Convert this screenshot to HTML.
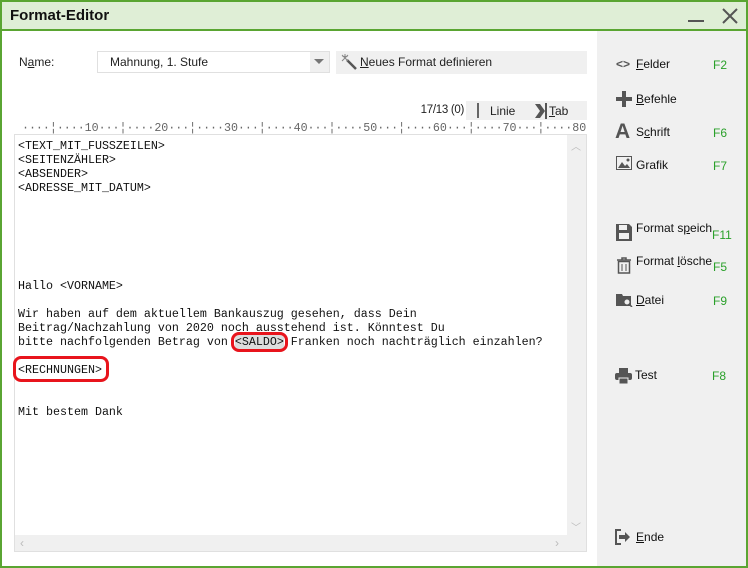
<!DOCTYPE html>
<html><head><meta charset="utf-8"><style>
*{margin:0;padding:0;box-sizing:border-box}
body{width:748px;height:568px;overflow:hidden;background:#fff;font-family:"Liberation Sans",sans-serif;position:relative}
.frame{position:absolute;left:0;top:0;width:748px;height:568px;border:2px solid #5aa532}
.title{position:absolute;left:2px;top:2px;width:744px;height:29px;background:#dfeed6;border-bottom:2px solid #5aa532}
.title span{position:absolute;left:8px;top:5px;font-weight:bold;font-size:15px;color:#111}
.side{position:absolute;left:597px;top:31px;width:149px;height:535px;background:#f0f0f0}
.abs{position:absolute}
.mono{font-family:"Liberation Mono",monospace;font-size:11.67px;color:#111}
.si{position:absolute;font-size:12px;color:#111}
.fk{position:absolute;font-size:12px;color:#2aa02a}
u{text-decoration:underline}
</style></head><body>
<div class="frame"></div>
<div class="title"><span>Format-Editor</span>
<div class="abs" style="left:686px;top:18px;width:16px;height:2px;background:#555"></div>
<svg class="abs" style="left:720px;top:6px" width="16" height="16"><path d="M1 1L15 15M15 1L1 15" stroke="#555" stroke-width="2"/></svg>
</div>
<div class="abs" style="left:19px;top:55px;font-size:12px;color:#222">N<u>a</u>me:</div>
<div class="abs" style="left:97px;top:51px;width:233px;height:22px;border:1px solid #e0e0e0;background:#fff"></div>
<div class="abs" style="left:310px;top:52px;width:19px;height:20px;background:#f0f0f0"></div>
<svg class="abs" style="left:314px;top:59px" width="10" height="6"><path d="M0 0L10 0L5 5Z" fill="#777"/></svg>
<div class="abs" style="left:110px;top:55px;font-size:12px;color:#222">Mahnung, 1. Stufe</div>
<div class="abs" style="left:336px;top:51px;width:251px;height:23px;background:#f0f0f0"></div>
<svg class="abs" style="left:340px;top:53px" width="18" height="18"><path d="M7 7L16 16" stroke="#555" stroke-width="2.5"/><path d="M5 1V6M2.5 3.5H7.5M2 8L8 2M2 2L8 8" stroke="#888" stroke-width="1"/></svg>
<div class="abs" style="left:360px;top:55px;font-size:12px;color:#222"><u>N</u>eues Format definieren</div>
<div class="abs" style="left:380px;width:84px;text-align:right;top:104px;font-size:11.5px;color:#222;letter-spacing:-0.3px">17/13 (0)</div>
<div class="abs" style="left:466px;top:101px;width:121px;height:19px;background:#f0f0f0"></div>
<div class="abs" style="left:477px;top:103px;width:2px;height:15px;background:#666"></div>
<div class="abs" style="left:490px;top:104px;font-size:12px;color:#222">Linie</div>
<svg class="abs" style="left:534px;top:103px" width="14" height="16"><path d="M1 1L6 1L11 8L6 15L1 15L6 8Z" fill="#555"/><rect x="11" y="0" width="2" height="16" fill="#555"/></svg>
<div class="abs" style="left:549px;top:104px;font-size:12px;color:#222"><u>T</u>ab</div>
<div class="abs mono" style="left:22px;top:121px;color:#666;white-space:pre;letter-spacing:-0.03px">····¦····10···¦····20···¦····30···¦····40···¦····50···¦····60···¦····70···¦····80</div>
<div class="abs" style="left:14px;top:134px;width:573px;height:418px;border:1px solid #e0e0e0;background:#fff"></div>
<div class="abs" style="left:567px;top:135px;width:19px;height:400px;background:#f0f0f0"></div>
<div class="abs" style="left:15px;top:535px;width:571px;height:16px;background:#f0f0f0"></div>
<div class="abs" style="left:571px;top:138px;color:#bbb;font-size:10px">︿</div>
<div class="abs" style="left:571px;top:519px;color:#bbb;font-size:10px">﹀</div>
<div class="abs" style="left:20px;top:536px;color:#bbb;font-size:12px">‹</div>
<div class="abs" style="left:555px;top:536px;color:#bbb;font-size:12px">›</div>
<pre class="abs mono" style="left:18px;top:139px;line-height:14px">&lt;TEXT_MIT_FUSSZEILEN&gt;
&lt;SEITENZÄHLER&gt;
&lt;ABSENDER&gt;
&lt;ADRESSE_MIT_DATUM&gt;






Hallo &lt;VORNAME&gt;

Wir haben auf dem aktuellem Bankauszug gesehen, dass Dein
Beitrag/Nachzahlung von 2020 noch ausstehend ist. Könntest Du
bitte nachfolgenden Betrag von <span style="background:#ddd">&lt;SALDO&gt;</span> Franken noch nachträglich einzahlen?

&lt;RECHNUNGEN&gt;


Mit bestem Dank</pre>
<div class="abs" style="left:231px;top:332px;width:57px;height:20px;border:3px solid #e8141c;border-radius:8px"></div>
<div class="abs" style="left:13px;top:356px;width:96px;height:26px;border:3px solid #e8141c;border-radius:8px"></div>
<div class="side"></div>
<div class="si" style="left:616px;top:57px;font-weight:bold;color:#555">&lt;&gt;</div>
<div class="si" style="left:636px;top:57px"><u>F</u>elder</div><div class="fk" style="left:713px;top:58px">F2</div>
<svg class="abs" style="left:616px;top:91px" width="16" height="16"><path d="M6 0H10V6H16V10H10V16H6V10H0V6H6Z" fill="#555"/></svg>
<div class="si" style="left:636px;top:92px"><u>B</u>efehle</div>
<div class="si" style="left:615px;top:120px;font-size:21px;font-weight:bold;color:#555">A</div>
<div class="si" style="left:636px;top:125px">S<u>c</u>hrift</div><div class="fk" style="left:713px;top:126px">F6</div>
<svg class="abs" style="left:616px;top:156px" width="16" height="14"><rect x="0.5" y="0.5" width="15" height="13" fill="none" stroke="#555"/><path d="M2 12L6 6L9 10L11 8L14 12Z" fill="#555"/><circle cx="12" cy="4" r="1.5" fill="#555"/></svg>
<div class="si" style="left:636px;top:158px">Grafik</div><div class="fk" style="left:713px;top:159px">F7</div>
<svg class="abs" style="left:616px;top:224px" width="16" height="17"><path d="M0 0H13L16 3V17H0Z" fill="#555"/><rect x="3" y="1" width="8" height="5" fill="#f0f0f0"/><rect x="3" y="9" width="10" height="6" fill="#f0f0f0"/></svg>
<div class="si" style="left:636px;top:221px">Format s<u>p</u>eich</div><div class="fk" style="left:712px;top:228px">F11</div>
<svg class="abs" style="left:617px;top:257px" width="14" height="17"><path d="M0 3H14M5 3V1H9V3" stroke="#555" fill="none" stroke-width="1.5"/><rect x="1.5" y="4.5" width="11" height="11.5" fill="none" stroke="#555" stroke-width="1.5"/><path d="M5 7V14M9 7V14" stroke="#555"/></svg>
<div class="si" style="left:636px;top:254px">Format <u>l</u>ösche</div><div class="fk" style="left:713px;top:260px">F5</div>
<svg class="abs" style="left:616px;top:293px" width="17" height="14"><path d="M0 1H6L7 3H15V13H0Z" fill="#555"/><circle cx="11" cy="9" r="3" fill="#f0f0f0" stroke="#555"/><path d="M13 11L16 14" stroke="#555" stroke-width="1.5"/></svg>
<div class="si" style="left:636px;top:293px"><u>D</u>atei</div><div class="fk" style="left:713px;top:294px">F9</div>
<svg class="abs" style="left:615px;top:368px" width="17" height="16"><rect x="4" y="0" width="9" height="5" fill="#555"/><rect x="0" y="5" width="17" height="7" rx="2" fill="#555"/><rect x="4" y="10" width="9" height="6" fill="#555" stroke="#f0f0f0"/></svg>
<div class="si" style="left:635px;top:368px">Test</div><div class="fk" style="left:712px;top:369px">F8</div>
<svg class="abs" style="left:615px;top:529px" width="17" height="16"><path d="M6 1H1V15H6" stroke="#555" stroke-width="2" fill="none"/><path d="M4 6H10V3L15 8L10 13V10H4Z" fill="#555"/></svg>
<div class="si" style="left:636px;top:530px"><u>E</u>nde</div>
</body></html>
